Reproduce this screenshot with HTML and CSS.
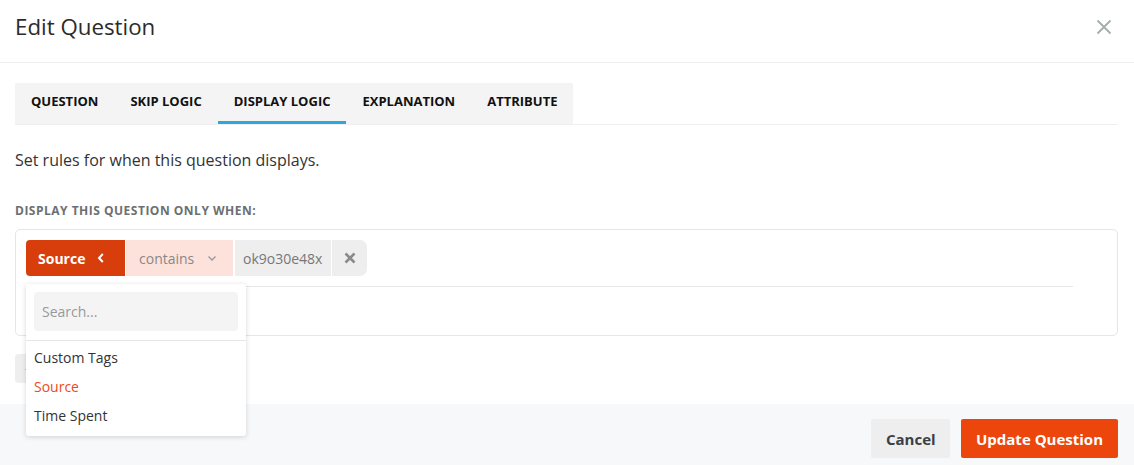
FILE: index.html
```html
<!DOCTYPE html>
<html>
<head>
<meta charset="utf-8">
<link rel="stylesheet" href="styles.css">
</head>
<body>
<div class="modal">
  <div class="modal-header">
    <h1 class="title">Edit Question</h1>
    <button class="close" aria-label="Close">
      <svg width="16" height="16" viewBox="0 0 16 16"><path d="M1.5 1.5 L14.5 14.5 M14.5 1.5 L1.5 14.5" stroke="#a3adad" stroke-width="1.8" fill="none"/></svg>
    </button>
  </div>
  <div class="modal-body">
    <div class="tabs-wrap">
      <div class="tabs">
        <div class="tab">Question</div>
        <div class="tab">Skip Logic</div>
        <div class="tab active">Display Logic</div>
        <div class="tab">Explanation</div>
        <div class="tab">Attribute</div>
      </div>
    </div>
    <p class="desc">Set rules for when this question displays.</p>
    <div class="label">Display this question only when:</div>
    <div class="rules">
      <div class="rule-row">
        <div class="chips">
          <div class="chip chip-field">Source
            <svg width="10" height="12" viewBox="0 0 10 12"><path d="M6.8 2 L3 6 L6.8 10" stroke="#fff" stroke-width="2" fill="none"/></svg>
          </div>
          <div class="chip chip-op">contains
            <svg width="10" height="10" viewBox="0 0 10 10"><path d="M1.5 3.5 L5 7 L8.5 3.5" stroke="#999" stroke-width="1.4" fill="none"/></svg>
          </div>
          <div class="chip chip-val">ok9o30e48x</div>
          <div class="chip chip-del">
            <svg width="12" height="12" viewBox="0 0 12 12"><path d="M1.5 1.5 L10.5 10.5 M10.5 1.5 L1.5 10.5" stroke="#8a8a8a" stroke-width="2.6" fill="none"/></svg>
          </div>
        </div>
        <div class="dropdown">
          <div class="search-wrap"><div class="search">Search...</div></div>
          <ul class="options">
            <li>Custom Tags</li>
            <li class="selected">Source</li>
            <li>Time Spent</li>
          </ul>
        </div>
      </div>
      <div class="rule-rest"></div>
    </div>
    <button class="add-btn">+ Add Condition</button>
  </div>
  <div class="modal-footer">
    <button class="btn btn-cancel">Cancel</button>
    <button class="btn btn-primary">Update Question</button>
  </div>
</div>
</body>
</html>
```

FILE: styles.css
```css
* { box-sizing: border-box; }
html, body { margin: 0; padding: 0; background: #fff; }
body {
  font-family: "Open Sans", "Noto Sans", sans-serif;
  color: #333;
  width: 1134px;
  height: 465px;
  overflow: hidden;
}
button { font-family: inherit; border: none; cursor: pointer; }

.modal { display: flex; flex-direction: column; height: 465px; }

.modal-header {
  height: 63px;
  display: flex;
  align-items: center;
  justify-content: space-between;
  padding: 0 22px 8px 15px;
  border-bottom: 1px solid #efefef;
}
.title {
  margin: 0;
  font-size: 22.3px;
  font-weight: 400;
  color: #2b2b2b;
  line-height: 1;
}
.close { background: none; padding: 0; width: 16px; height: 16px; display: flex; }

.modal-body {
  padding: 20px 16px 20px 15px;
  flex: 1;
}
.tabs-wrap { border-bottom: 1px solid #f0f0f0; }
.tabs {
  display: inline-flex;
  background: #f4f4f4;
  height: 41px;
}
.tab {
  padding: 0 16px 2px;
  font-size: 13px;
  font-weight: 700;
  text-transform: uppercase;
  color: #111;
  display: flex;
  align-items: center;
  border-bottom: 3px solid transparent;
}
.tab.active { border-bottom-color: #2ca8df; }

.desc {
  margin: 24px 0 0;
  font-size: 16px;
  line-height: 22px;
  color: #333;
}
.label {
  margin-top: 32px;
  font-size: 12px;
  font-weight: 700;
  letter-spacing: 0.5px;
  text-transform: uppercase;
  color: #6b6f72;
  line-height: 16px;
}
.rules {
  margin-top: 10px;
  border: 1px solid #e6e6e6;
  border-radius: 5px;
  padding: 10px 44px 0 10px;
  height: 107px;
}
.rule-row {
  position: relative;
  border-bottom: 1px solid #e6e6e6;
  padding-bottom: 10px;
}
.chips { display: flex; height: 36px; }
.chip {
  display: flex;
  align-items: center;
  font-size: 14px;
  height: 36px;
}
.chip-field {
  background: #d73e0b;
  color: #fff;
  font-weight: 700;
  padding: 0 18px 0 12px;
  gap: 11px;
  border-radius: 4px 0 0 4px;
  width: 99px;
}
.chip-op {
  background: #fde2dc;
  color: #888;
  margin-left: 1px;
  padding: 0 12px 0 13px;
  gap: 13px;
  width: 107px;
}
.chip-val {
  background: #eeeeee;
  color: #777;
  margin-left: 2px;
  padding: 0 9px 0 8px;
  width: 96px;
}
.chip-del {
  background: #eeeeee;
  margin-left: 1px;
  width: 35px;
  justify-content: center;
  border-radius: 0 7px 7px 0;
}

.dropdown {
  position: absolute;
  left: 0;
  top: 44px;
  width: 220px;
  background: #fff;
  border-radius: 3px;
  box-shadow: 0 1px 5px rgba(0,0,0,0.16);
  z-index: 10;
  padding-bottom: 6px;
}
.search-wrap { padding: 8px 8px 9px; border-bottom: 1px solid #e6e6e6; }
.search {
  height: 39px;
  background: #f4f4f4;
  border-radius: 4px;
  font-size: 14px;
  color: #999;
  display: flex;
  align-items: center;
  padding-left: 8px;
}
.options { list-style: none; margin: 0; padding: 2px 0 0; }
.options li {
  font-size: 14px;
  color: #333;
  height: 29px;
  line-height: 29px;
  padding-left: 8px;
}
.options li.selected { color: #ee4b1c; }

.add-btn {
  margin-top: 18px;
  height: 29px;
  background: #eeeeee;
  border-radius: 4px;
  font-size: 13px;
  color: #555;
  padding: 0 10px;
}

.modal-footer {
  background: #f7f8fa;
  height: 61px;
  display: flex;
  justify-content: flex-end;
  align-items: center;
  gap: 11px;
  padding: 8px 16px 0 0;
}
.btn {
  height: 39px;
  font-size: 15px;
  font-weight: 700;
  border-radius: 2px;
  padding: 0 15px;
  white-space: nowrap;
}
.btn-cancel { background: #eeeeee; color: #3a3f45; width: 79px; }
.btn-primary { background: #ec460d; color: #fff; }
```
